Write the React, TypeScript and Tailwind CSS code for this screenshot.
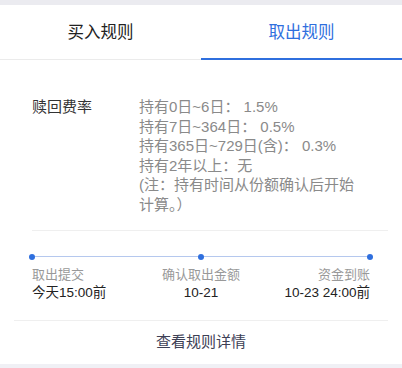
import React from "react";

export default function App() {
  const font = '"Liberation Sans", "Noto Sans CJK SC", sans-serif';
  return (
    <div className="w-[402px] h-[368px] bg-white flex flex-col overflow-hidden" style={{ fontFamily: font }}>
      <div className="h-[5px] bg-[#ebebf0]" />
      <div className="flex h-[55px] border-b border-[#ebebeb]">
        <div className="flex-1 flex items-center justify-center text-[16.5px] text-[#222]">买入规则</div>
        <div className="flex-1 relative flex items-center justify-center text-[16.5px] text-[#2f6fde]">
          取出规则
          <span className="absolute left-0 right-0 bottom-[-1px] h-[2.5px] bg-[#2f6fde]" />
        </div>
      </div>

      <div className="flex pt-[37px] pl-[32px]">
        <div className="w-[107px] text-[15px] leading-[19.6px] text-[#333]">赎回费率</div>
        <div className="text-[15px] leading-[19.6px] text-[#8a8a8a]">
          <div>持有0日~6日： 1.5%</div>
          <div>持有7日~364日： 0.5%</div>
          <div>持有365日~729日(含)： 0.3%</div>
          <div>持有2年以上：无</div>
          <div>(注：持有时间从份额确认后开始</div>
          <div>计算。）</div>
        </div>
      </div>

      <div className="mt-[15px] ml-[32px] mr-[14px] h-px bg-[#efefef]" />

      <div className="mt-[23px] ml-[29px] w-[344px] h-[6px] flex items-center">
        <span className="w-[6px] h-[6px] rounded-full bg-[#2f6fde]" />
        <span className="flex-1 h-px bg-[#b5c8ee]" />
        <span className="w-[6px] h-[6px] rounded-full bg-[#2f6fde]" />
        <span className="flex-1 h-px bg-[#b5c8ee]" />
        <span className="w-[6px] h-[6px] rounded-full bg-[#2f6fde]" />
      </div>

      <div className="mt-[6px] ml-[32px] w-[338px] grid grid-cols-3">
        <div className="text-left">
          <div className="text-[13px] leading-[18px] text-[#999]">取出提交</div>
          <div className="text-[13.5px] leading-[18px] text-[#222]">今天15:00前</div>
        </div>
        <div className="text-center">
          <div className="text-[13px] leading-[18px] text-[#999]">确认取出金额</div>
          <div className="text-[13.5px] leading-[18px] text-[#222]">10-21</div>
        </div>
        <div className="text-right">
          <div className="text-[13px] leading-[18px] text-[#999]">资金到账</div>
          <div className="text-[13.5px] leading-[18px] text-[#222] whitespace-nowrap">10-23 24:00前</div>
        </div>
      </div>

      <div className="mt-[18px] mx-[14px] h-px bg-[#efefef]" />

      <div className="h-[43px] flex items-center justify-center text-[15px] text-[#3d4055]">查看规则详情</div>
      <div className="flex-1 bg-[#f0f0f5]" />
    </div>
  );
}
